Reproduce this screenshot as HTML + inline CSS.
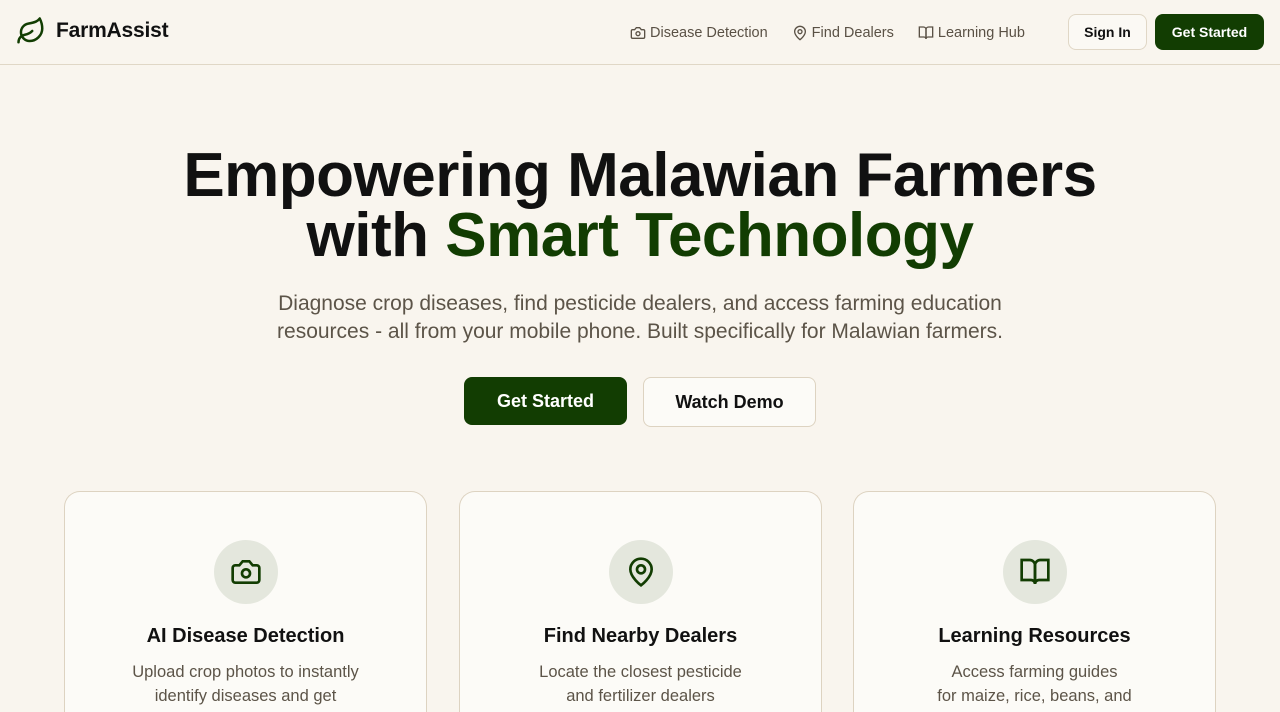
<!DOCTYPE html>
<html><head><meta charset="utf-8"><style>
*{box-sizing:border-box;margin:0;padding:0}
html,body{width:1280px;height:712px;overflow:hidden}
body{background:#f9f5ee;font-family:"Liberation Sans",sans-serif;color:#111;position:relative}
.nav{height:65px;border-bottom:1px solid #e0d7c6;position:relative}
.logo{position:absolute;left:16px;top:16px;display:flex;align-items:center;gap:10px;font-weight:700;font-size:21px;letter-spacing:-0.2px}
.links{position:absolute;left:630px;top:25px;display:flex;gap:24px;font-size:14.5px;color:#5a5145}
.links span{display:flex;align-items:center;gap:4px}
.btn{position:absolute;top:14px;height:36px;border-radius:8px;font-size:14px;font-weight:700;display:flex;align-items:center;justify-content:center}
.si{left:1068px;width:79px;border:1px solid #e0d7c6;background:#fbf9f4}
.gs{left:1155px;width:109px;background:#123d02;color:#fff}
h1{position:absolute;top:146px;left:0;width:1280px;text-align:center;font-size:62px;line-height:60px;font-weight:700;letter-spacing:-0.5px;color:#111}
h1 em{font-style:normal;color:#123d02}
.sub{position:absolute;top:290px;left:0;width:1280px;text-align:center;font-size:21px;line-height:28px;color:#5c5448}
.b1{position:absolute;left:464px;top:377px;width:163px;height:48px;border-radius:8px;background:#123d02;color:#fff;font-size:18px;font-weight:700;display:flex;align-items:center;justify-content:center}
.b2{position:absolute;left:643px;top:377px;width:173px;height:50px;border-radius:8px;background:#fcfbf7;border:1px solid #ddd3c1;font-size:18px;font-weight:700;display:flex;align-items:center;justify-content:center}
.card{position:absolute;top:491px;width:363px;height:222px;border:1px solid #ddd3c1;border-bottom:none;border-radius:16px 16px 0 0;background:#fcfbf7;text-align:center}
.ic{width:64px;height:64px;border-radius:50%;background:#e4e7dd;margin:48px auto 0;display:flex;align-items:center;justify-content:center}
.card h3{font-size:20px;font-weight:700;margin-top:18px;line-height:28px}
.card p{font-size:16.5px;line-height:24px;color:#5c5448;margin-top:10px;white-space:nowrap}
</style></head><body>
<div class="nav">
<div class="logo"><svg width="30" height="30" viewBox="0 0 24 24" fill="none" stroke="#123d02" stroke-width="2" stroke-linecap="round" stroke-linejoin="round"><path d="M11 20A7 7 0 0 1 9.8 6.1C15.5 5 17 4.48 19 2c1 2 2 4.18 2 8 0 5.5-4.780 10-10 10Z"/><path d="M2 21c0-3 1.85-5.36 5.08-6C9.5 14.52 12 13 13 12"/></svg>FarmAssist</div>
<div class="links">
<span><svg width="16" height="16" viewBox="0 0 24 24" fill="none" stroke="#5a5145" stroke-width="2"><path d="M14.5 4h-5L7 7H4a2 2 0 0 0-2 2v9a2 2 0 0 0 2 2h16a2 2 0 0 0 2-2V9a2 2 0 0 0-2-2h-3l-2.5-3z"/><circle cx="12" cy="13" r="3"/></svg>Disease Detection</span>
<span><svg width="16" height="16" viewBox="0 0 24 24" fill="none" stroke="#5a5145" stroke-width="2"><path d="M20 10c0 6-8 12-8 12s-8-6-8-12a8 8 0 0 1 16 0Z"/><circle cx="12" cy="10" r="3"/></svg>Find Dealers</span>
<span><svg width="16" height="16" viewBox="0 0 24 24" fill="none" stroke="#5a5145" stroke-width="2"><path d="M2 3h6a4 4 0 0 1 4 4v14a3 3 0 0 0-3-3H2z"/><path d="M22 3h-6a4 4 0 0 0-4 4v14a3 3 0 0 1 3-3h7z"/></svg>Learning Hub</span>
</div>
<div class="btn si">Sign In</div><div class="btn gs">Get Started</div>
</div>
<h1>Empowering Malawian Farmers<br>with <em>Smart Technology</em></h1>
<div class="sub">Diagnose crop diseases, find pesticide dealers, and access farming education<br>resources - all from your mobile phone. Built specifically for Malawian farmers.</div>
<div class="b1">Get Started</div><div class="b2">Watch Demo</div>
<div class="card" style="left:64px"><div class="ic"><svg width="32" height="32" viewBox="0 0 24 24" fill="none" stroke="#123d02" stroke-width="2"><path d="M14.5 4h-5L7 7H4a2 2 0 0 0-2 2v9a2 2 0 0 0 2 2h16a2 2 0 0 0 2-2V9a2 2 0 0 0-2-2h-3l-2.5-3z"/><circle cx="12" cy="13" r="3"/></svg></div><h3>AI Disease Detection</h3><p>Upload crop photos to instantly<br>identify diseases and get</p></div>
<div class="card" style="left:459px"><div class="ic"><svg width="32" height="32" viewBox="0 0 24 24" fill="none" stroke="#123d02" stroke-width="2"><path d="M20 10c0 6-8 12-8 12s-8-6-8-12a8 8 0 0 1 16 0Z"/><circle cx="12" cy="10" r="3"/></svg></div><h3>Find Nearby Dealers</h3><p>Locate the closest pesticide<br>and fertilizer dealers</p></div>
<div class="card" style="left:853px"><div class="ic"><svg width="32" height="32" viewBox="0 0 24 24" fill="none" stroke="#123d02" stroke-width="2"><path d="M2 3h6a4 4 0 0 1 4 4v14a3 3 0 0 0-3-3H2z"/><path d="M22 3h-6a4 4 0 0 0-4 4v14a3 3 0 0 1 3-3h7z"/></svg></div><h3>Learning Resources</h3><p>Access farming guides<br>for maize, rice, beans, and</p></div>
</body></html>
